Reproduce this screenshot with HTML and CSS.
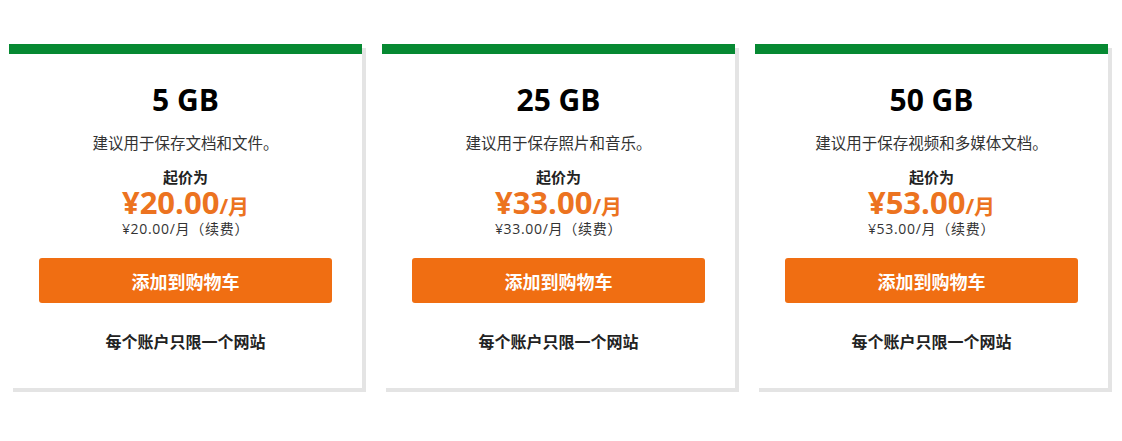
FILE: index.html
```html
<!doctype html>
<html>
  <head>
    <title>存储方案</title>
    <meta charset="utf-8" />
    <link rel="stylesheet" href="styles.css">
  </head>
  <body>
    <div class="plans">
      <div class="plan">
        <div class="plan-size">5 GB</div>
        <div class="plan-desc">建议用于保存文档和文件。</div>
        <div class="plan-from">起价为</div>
        <div class="plan-price">¥20.00<span class="plan-unit">/月</span></div>
        <div class="plan-renew">¥20.00/月（续费）</div>
        <a class="plan-button" href="#">添加到购物车</a>
        <div class="plan-note">每个账户只限一个网站</div>
      </div>
      <div class="plan">
        <div class="plan-size">25 GB</div>
        <div class="plan-desc">建议用于保存照片和音乐。</div>
        <div class="plan-from">起价为</div>
        <div class="plan-price">¥33.00<span class="plan-unit">/月</span></div>
        <div class="plan-renew">¥33.00/月（续费）</div>
        <a class="plan-button" href="#">添加到购物车</a>
        <div class="plan-note">每个账户只限一个网站</div>
      </div>
      <div class="plan">
        <div class="plan-size">50 GB</div>
        <div class="plan-desc">建议用于保存视频和多媒体文档。</div>
        <div class="plan-from">起价为</div>
        <div class="plan-price">¥53.00<span class="plan-unit">/月</span></div>
        <div class="plan-renew">¥53.00/月（续费）</div>
        <a class="plan-button" href="#">添加到购物车</a>
        <div class="plan-note">每个账户只限一个网站</div>
      </div>
    </div>
  </body>
</html>
```

FILE: styles.css
```css
* {
  box-sizing: border-box;
}

body {
  margin: 0;
  min-height: 441px;
  background: #fff;
  color: #333;
  font-family: "Open Sans", "Noto Sans CJK SC", sans-serif;
}

.plans {
  display: flex;
  align-items: flex-start;
  gap: 20px;
  padding: 44px 0 20px 9px;
}

.plan {
  flex: none;
  width: 353px;
  height: 344px;
  border-top: 10px solid #068932;
  background: #fff;
  box-shadow: 4px 4px 0 0 #e4e4e4;
  padding: 26px 30px 0;
  display: flex;
  flex-direction: column;
  align-items: center;
  text-align: center;
}

.plan-size {
  font-size: 30px;
  line-height: 40px;
  font-weight: bold;
  color: #000;
}

.plan-desc {
  margin-top: 11px;
  font-size: 15.5px;
  line-height: 24px;
}

.plan-from {
  margin-top: 12px;
  height: 20px;
  font-size: 15px;
  line-height: 20px;
  font-weight: bold;
  color: #222;
}

.plan-price {
  height: 31px;
  font-size: 31px;
  line-height: 31px;
  font-weight: bold;
  color: #ec7320;
}

.plan-unit {
  font-size: 21px;
  line-height: 1;
}

.plan-renew {
  margin-top: 2px;
  height: 18px;
  font-size: 14px;
  line-height: 18px;
  letter-spacing: 0.7px;
}

.plan-button {
  margin-top: 20px;
  width: 100%;
  height: 45px;
  flex: none;
  display: grid;
  place-items: center;
  background: #f06e12;
  border-radius: 3px;
  color: #fff;
  font-size: 18px;
  font-weight: bold;
  text-decoration: none;
}

.plan-note {
  margin-top: 27px;
  font-size: 16px;
  line-height: 24px;
  font-weight: bold;
  color: #222;
}
```
